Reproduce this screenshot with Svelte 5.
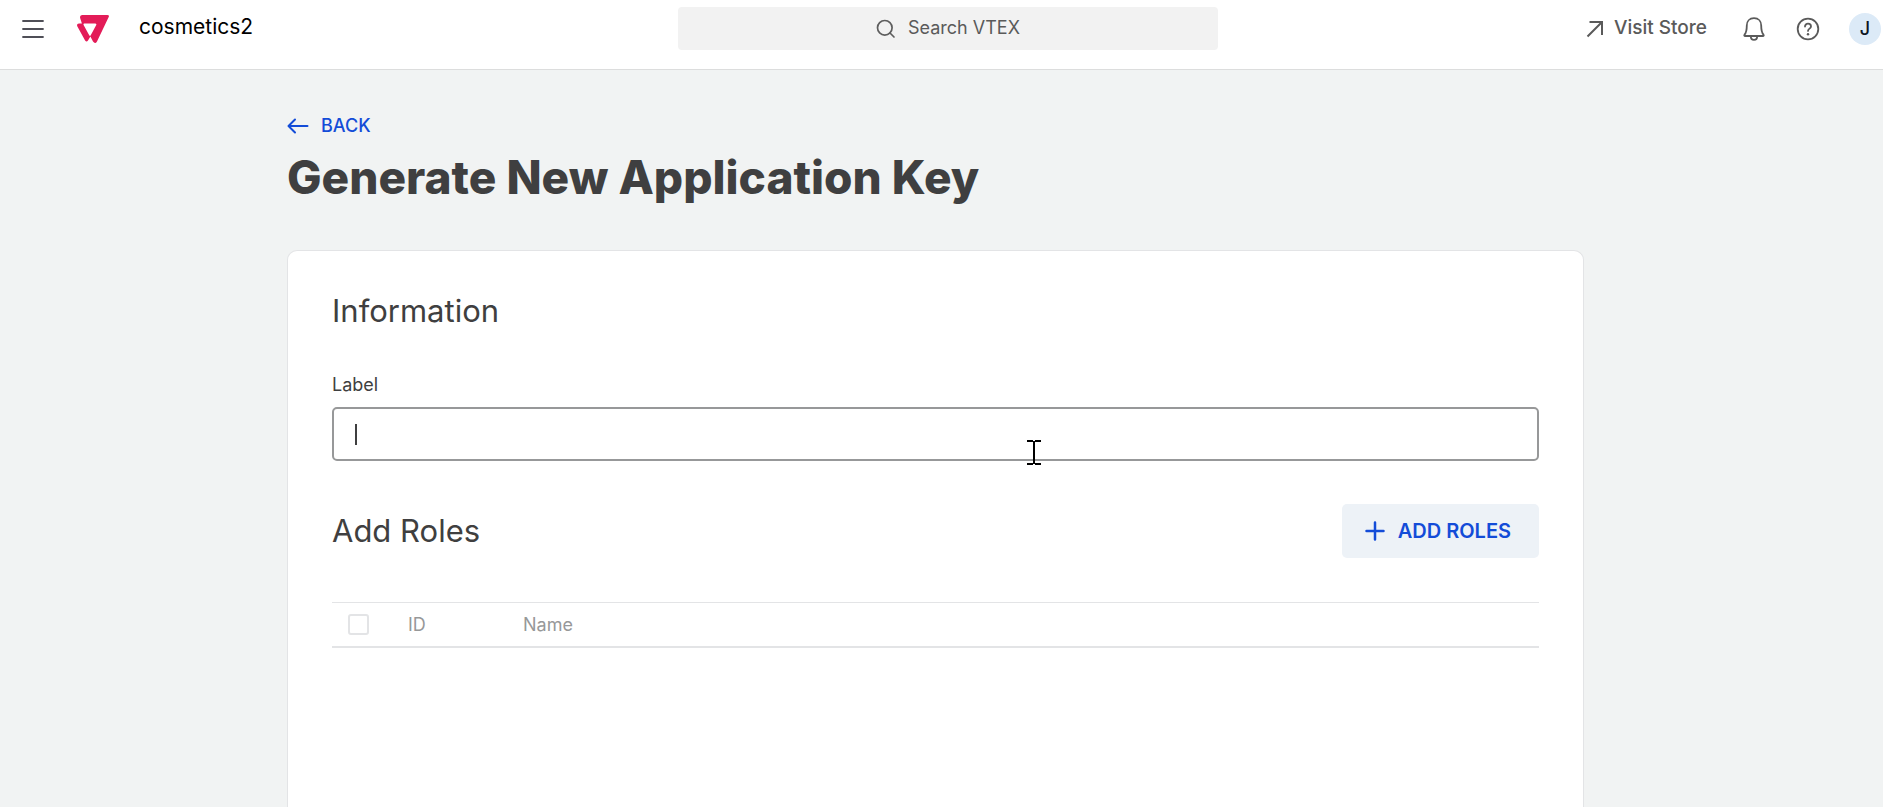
<script>
  let label = $state('');
  let allSelected = $state(false);
</script>

<div class="page">
  <header class="topbar">
    <div class="start">
      <button class="icon-button" type="button" aria-label="Menu">
        <svg width="24" height="24" viewBox="0 0 24 24" fill="none" stroke="#4f4f57" stroke-width="1.8" stroke-linecap="round">
          <path d="M2 4h20M2 12h20M2 20h20" />
        </svg>
      </button>
      <a class="logo" href="#home" aria-label="Home">
        <svg width="34" height="30" viewBox="0 0 34 30">
          <path
            fill="#e31c58"
            fill-rule="evenodd"
            d="M6 1H31.3Q33.6 1 32.7 3.1L21 27.4Q19.2 30.4 17 27.6L14.4 22.6L12 26.6Q10.6 28.6 9.1 26.6L1.4 12.5Q0.2 9.8 2.9 9.5H5.900L4.2 4.2Q3.4 1.500 6 1ZM8.2 9.5H19Q21 9.5 20.1 11.2L14.6 21.6Q13.8 22.2 13.2 21.3L7.6 11Q7.2 9.800 8.2 9.5Z"
          />
        </svg>
      </a>
      <span class="account">cosmetics2</span>
    </div>

    <button class="search" type="button">
      <svg width="20" height="20" viewBox="0 0 20 20" fill="none" stroke="#5e5e5e" stroke-width="1.7" stroke-linecap="round">
        <circle cx="8.8" cy="8.8" r="7.3" />
        <path d="M14 14l4 4" />
      </svg>
      <span>Search VTEX</span>
    </button>

    <div class="end">
      <a class="visit" href="#store">
        <svg width="18" height="18" viewBox="0 0 18 18" fill="none" stroke="#5a5a5a" stroke-width="2">
          <path d="M1.5 16.5L16 2M3.5 2H16v13" />
        </svg>
        <span>Visit Store</span>
      </a>
      <button class="icon-button bell" type="button" aria-label="Notifications">
        <svg width="24" height="26" viewBox="0 0 24 26" fill="none" stroke="#5a5a5a" stroke-width="1.8" stroke-linejoin="round" stroke-linecap="round">
          <path d="M12 2.2c-4.500 0-7.200 3.200-7.200 7.300 0 4.200-.6 7.300-2.300 9.200-.5.7-.2 1.300.6 1.300h17.800c.8 0 1.100-.6.6-1.300-1.700-1.900-2.300-5-2.300-9.200 0-4.100-2.700-7.300-7.200-7.300z" />
          <path d="M8.800 20.200c0 2.300 1.300 3.600 3.200 3.600s3.200-1.300 3.200-3.600" />
        </svg>
      </button>
      <button class="icon-button help" type="button" aria-label="Help">
        <svg width="24" height="24" viewBox="0 0 24 24" fill="none" stroke="#5a5a5a" stroke-width="1.8" stroke-linecap="round" stroke-linejoin="round">
          <circle cx="12" cy="12" r="10.3" />
          <path d="M9 9.600c0-1.800 1.300-2.900 3-2.900s3 1.100 3 2.700c0 2.200-3 2.300-3 4.500" />
          <circle cx="12" cy="17.2" r="1.200" fill="#5a5a5a" stroke="none" />
        </svg>
      </button>
      <button class="avatar" type="button" aria-label="Account J">J</button>
    </div>
  </header>

  <main>
    <div class="content">
      <a class="back" href="#back">
        <svg width="22" height="18" viewBox="0 0 22 18" fill="none" stroke="#134cd8" stroke-width="2" stroke-linecap="round" stroke-linejoin="round">
          <path d="M20.500 9H2M8 2.500L1.500 9L8 15.500" />
        </svg>
        <span>BACK</span>
      </a>
      <h1>Generate New Application Key</h1>

      <section class="card">
        <h2>Information</h2>
        <label for="key-label">Label</label>
        <div class="field">
          <input id="key-label" type="text" bind:value={label} />
          {#if label === ''}
            <span class="caret" aria-hidden="true"></span>
          {/if}
          <svg class="pointer" width="14" height="26" viewBox="0 0 14 26" shape-rendering="crispEdges" aria-hidden="true">
            <path d="M0 0H6V1H8V0H14V2H8V23H14V25H8V24H6V25H0V23H6V2H0Z" />
          </svg>
        </div>

        <div class="roles-head">
          <h2>Add Roles</h2>
          <button class="add" type="button">
            <svg width="20" height="20" viewBox="0 0 20 20" fill="none" stroke="#134cd8" stroke-width="2.5" stroke-linecap="round">
              <path d="M10 1.500v17M1.500 10h17" />
            </svg>
            <span>ADD ROLES</span>
          </button>
        </div>

        <table>
          <thead>
            <tr>
              <th class="check" scope="col">
                <input type="checkbox" aria-label="Select all roles" bind:checked={allSelected} />
              </th>
              <th class="id" scope="col">ID</th>
              <th scope="col">Name</th>
            </tr>
          </thead>
        </table>
      </section>
    </div>
  </main>
</div>

<style>
  :global(body) {
    background: #f1f3f3;
  }

  .page {
    box-sizing: border-box;
    min-height: 100vh;
    display: flex;
    flex-direction: column;
    font-family: Inter, 'Liberation Sans', sans-serif;
    color: #3f3f40;
  }

  button,
  input {
    font: inherit;
    margin: 0;
  }

  button {
    border: 0;
    padding: 0;
    background: none;
    cursor: pointer;
  }

  a {
    color: inherit;
    text-decoration: none;
  }

  svg {
    display: block;
    flex: none;
  }

  .topbar {
    display: flex;
    align-items: center;
    padding: 7px 0 19px;
    background: #fff;
    border-bottom: 1px solid #dcdddd;
  }

  .start,
  .end {
    box-sizing: border-box;
    display: flex;
    align-items: center;
  }

  .start {
    flex: 1 1 21px;
    padding-left: 21px;
  }

  .logo {
    margin-left: 31px;
  }

  .account {
    margin-left: 29px;
    padding-bottom: 4px;
    font-size: 21px;
    line-height: 24px;
    color: #000;
  }

  .search {
    flex: 0 1 540px;
    height: 43px;
    display: flex;
    align-items: center;
    justify-content: center;
    gap: 12px;
    border-radius: 4px;
    background: #f2f2f2;
    color: #5a5a5a;
    font-size: 18px;
    line-height: 24px;
  }

  .search span,
  .visit span {
    padding-bottom: 2px;
  }

  .end {
    flex: 1 1 8px;
    justify-content: flex-end;
    padding-right: 2px;
    color: #5a5a5a;
  }

  .visit {
    display: flex;
    align-items: center;
    gap: 10px;
    font-size: 19px;
    line-height: 24px;
    font-weight: 500;
  }

  .bell {
    margin-left: 35px;
  }

  .help {
    margin-left: 30px;
  }

  .avatar {
    width: 32px;
    height: 32px;
    margin-left: 29px;
    border-radius: 50%;
    background: #dceaf7;
    color: #0c1522;
    font-size: 18px;
    font-weight: 500;
  }

  main {
    flex: 1;
    display: flex;
    justify-content: center;
    padding: 44px 12px 0 0;
  }

  .content {
    flex: 0 1 1297px;
    display: flex;
    flex-direction: column;
  }

  .back {
    align-self: flex-start;
    display: flex;
    align-items: center;
    gap: 12px;
    color: #134cd8;
    font-size: 18px;
    line-height: 24px;
    font-weight: 500;
  }

  h1 {
    margin: 11px 0 45px;
    font-size: 46px;
    line-height: 56px;
    font-weight: 800;
  }

  .card {
    flex: 1;
    padding: 44px;
    border: 1px solid #e3e4e6;
    border-bottom: 0;
    border-radius: 10px 10px 0 0;
    background: #fff;
  }

  h2 {
    margin: 0;
    font-size: 31px;
    line-height: 32px;
    font-weight: 400;
  }

  label {
    display: block;
    margin: 46px 0 10px;
    font-size: 18px;
    line-height: 24px;
  }

  .field {
    position: relative;
  }

  .field input {
    box-sizing: border-box;
    display: block;
    width: 100%;
    height: 54px;
    padding: 0 20px;
    border: 2px solid #979899;
    border-radius: 5px;
    outline: 0;
    background: #fff;
    color: #3f3f40;
    font-size: 18px;
  }

  .caret {
    position: absolute;
    left: 23px;
    top: 17px;
    width: 2px;
    height: 21px;
    background: #3f3f40;
    pointer-events: none;
  }

  .pointer {
    position: absolute;
    left: calc(50% + 91px);
    top: 33px;
    pointer-events: none;
  }

  .roles-head {
    display: flex;
    align-items: center;
    justify-content: space-between;
    margin: 43px 0 44px;
  }

  .add {
    display: flex;
    align-items: center;
    gap: 13px;
    height: 54px;
    padding: 0 28px 0 23px;
    border-radius: 5px;
    background: #edf2f7;
    color: #134cd8;
    font-size: 20px;
    font-weight: 600;
  }

  table {
    width: 100%;
    border-collapse: separate;
    border-spacing: 0;
    table-layout: fixed;
  }

  th {
    height: 43px;
    padding: 0;
    border-top: 1px solid #e3e4e6;
    border-bottom: 2px solid #e3e4e6;
    color: #979899;
    font-size: 18px;
    line-height: 24px;
    font-weight: 400;
    text-align: left;
    vertical-align: middle;
  }

  .check {
    width: 76px;
  }

  .id {
    width: 115px;
  }

  th input {
    appearance: none;
    box-sizing: border-box;
    display: block;
    width: 21px;
    height: 21px;
    margin-left: 16px;
    border: 2px solid #e3e4e6;
    border-radius: 3px;
    background: #fff;
  }

  th input:checked {
    border-color: #134cd8;
    background: #134cd8;
  }
</style>
